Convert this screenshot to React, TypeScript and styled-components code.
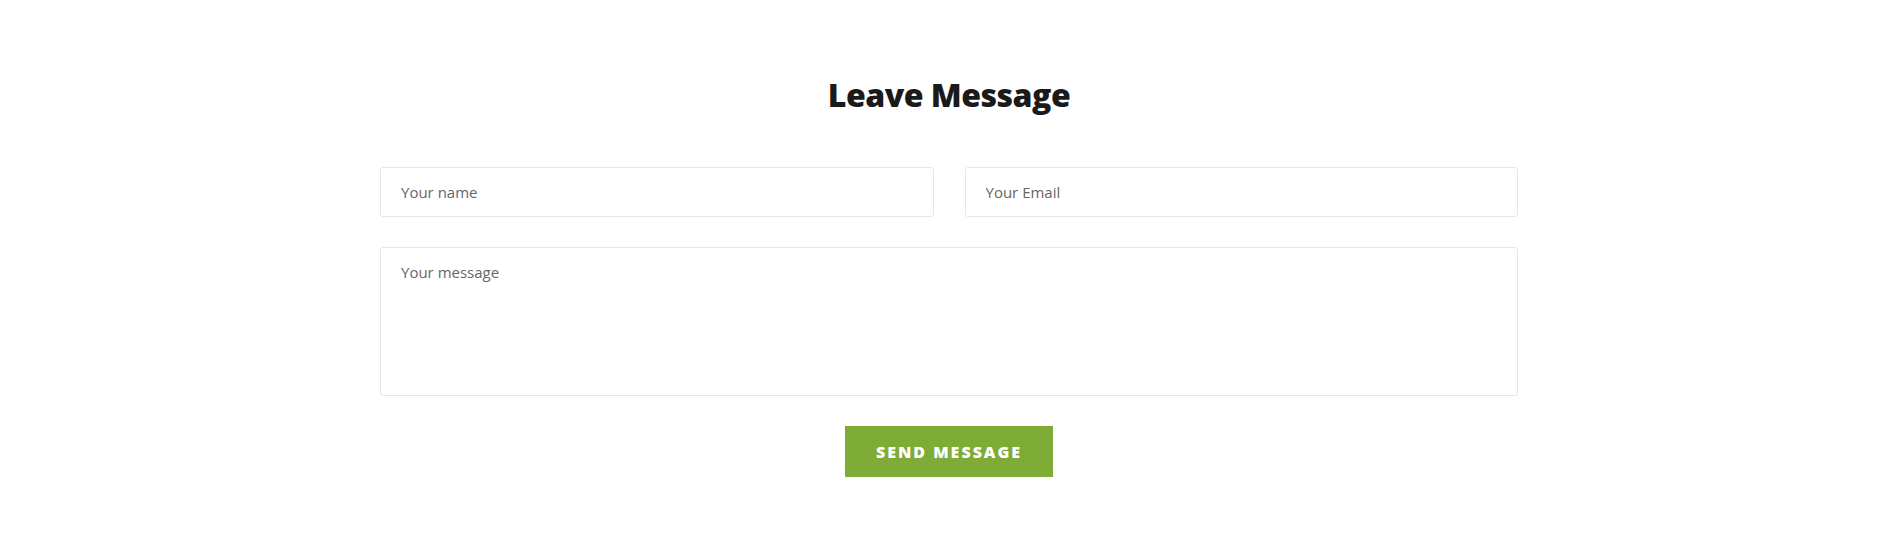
import React from "react";
import styled, {createGlobalStyle} from "styled-components";

const GlobalStyle = createGlobalStyle`
	html, body {
		margin: 0;
		padding: 0;
		background: #fff;
	}
	body {
		font-family: "Open Sans", "Liberation Sans", sans-serif;
	}
	* {
		box-sizing: border-box;
	}
`;

const Section = styled.section`
	padding: 73px 0 70px;
`;

const Container = styled.div`
	width: 1138px;
	margin: 0 auto;
	display: flex;
	flex-direction: column;
	align-items: center;
`;

const Title = styled.h2`
	margin: 0 0 50px;
	font-family: "Open Sans", sans-serif;
	font-weight: 800;
	font-size: 32px;
	line-height: 44px;
	letter-spacing: -0.5px;
	color: #1a1a1a;
`;

const Form = styled.form`
	width: 100%;
	display: flex;
	flex-direction: column;
	gap: 30px;
	align-items: center;
`;

const Row = styled.div`
	width: 100%;
	display: grid;
	grid-template-columns: 1fr 1fr;
	gap: 31px;
`;

const fieldBase = `
	width: 100%;
	border: 1px solid #e6e6e6;
	border-radius: 3px;
	background: #fff;
	padding: 0 20px;
	font-family: "Open Sans", sans-serif;
	font-size: 15px;
	color: #555;
	outline: none;
	&::placeholder {
		color: #666;
	}
`;

const Input = styled.input`
	${fieldBase};
	height: 50px;
`;

const TextArea = styled.textarea`
	${fieldBase};
	height: 149px;
	padding-top: 14px;
	resize: none;
	display: block;
`;

const SendButton = styled.button`
	width: 208px;
	height: 51px;
	border: none;
	border-radius: 0;
	background: #7fab37;
	color: #fff;
	font-family: "Open Sans", sans-serif;
	font-weight: 800;
	font-size: 16px;
	letter-spacing: 2px;
	text-transform: uppercase;
	cursor: pointer;
`;

export default function App() {
	return (
		<>
			<GlobalStyle />
			<Section>
				<Container>
					<Title>Leave Message</Title>
					<Form onSubmit={e => e.preventDefault()}>
						<Row>
							<Input type="text" placeholder="Your name" />
							<Input type="email" placeholder="Your Email" />
						</Row>
						<TextArea placeholder="Your message" />
						<SendButton type="submit">Send Message</SendButton>
					</Form>
				</Container>
			</Section>
		</>
	);
}
